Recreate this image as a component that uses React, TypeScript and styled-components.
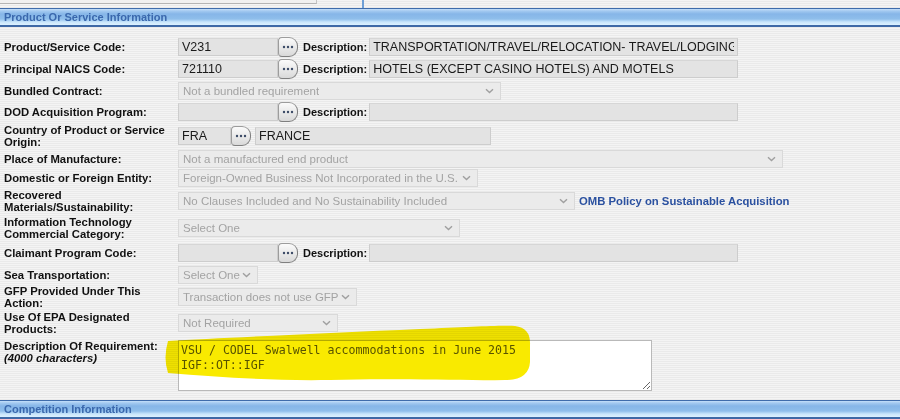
import styled, { createGlobalStyle } from 'styled-components';

const GlobalStyle = createGlobalStyle`
  html, body {
    margin: 0;
    padding: 0;
  }
  body {
    width: 900px;
    height: 419px;
    overflow: hidden;
    font-family: 'Liberation Sans', Arial, sans-serif;
    background: repeating-linear-gradient(#f4f4f4 0 1px, #eaeaea 1px 2px);
  }
`;

const Page = styled.div`
  position: relative;
  width: 900px;
  height: 419px;
  overflow: hidden;
`;

const TopStrip = styled.div`
  display: flex;
  align-items: flex-start;
  height: 8px;
`;

const PrevBox = styled.div`
  width: 316px;
  height: 3px;
  background: #f0f0f0;
  border-bottom: 1px solid #b4b4b4;
  border-right: 1px solid #c4c4c4;
`;

const PrevDivider = styled.div`
  margin-left: 45px;
  width: 2px;
  height: 8px;
  background: #6e9fd6;
`;

const SectionBar = styled.div`
  height: 16px;
  padding-left: 4px;
  border-top: 1px solid #3f6cab;
  border-bottom: 2px solid #3e69a6;
  background: linear-gradient(
    #c4e0fa 0,
    #a3c9f0 2px,
    #86b6e8 5px,
    #8fbeeb 10px,
    #c9e6fb 13px,
    #dcf1ff 16px
  );
  color: #3a68ad;
  font-size: 11px;
  font-weight: bold;
  line-height: 17px;
`;

const Rows = styled.div`
  padding-top: 9px;
`;

const Row = styled.div<{ $h: number; $top?: boolean }>`
  display: flex;
  align-items: ${(p) => (p.$top ? 'flex-start' : 'center')};
  height: ${(p) => p.$h}px;
`;

const Label = styled.div<{ $mt?: number }>`
  flex: none;
  width: 178px;
  margin-top: ${(p) => p.$mt || 0}px;
  padding-left: 4px;
  box-sizing: border-box;
  color: #111;
  font-size: 11.3px;
  font-weight: bold;
  line-height: 12px;
`;

const Hint = styled.i`
  font-weight: bold;
`;

const TextBox = styled.input<{ $w: number; $ml?: number }>`
  width: ${(p) => p.$w}px;
  height: 18px;
  margin: 0 0 0 ${(p) => p.$ml || 0}px;
  padding: 0 3px;
  box-sizing: border-box;
  border: 1px solid #cdcdcd;
  border-top-color: #d6d6d6;
  background: #e3e3e3;
  color: #1a1a1a;
  font-family: 'Liberation Sans', Arial, sans-serif;
  font-size: 12.5px;
  outline: none;
`;

const LookupBtn = styled.button<{ $ml?: number }>`
  display: flex;
  align-items: center;
  justify-content: center;
  width: 20px;
  height: 20px;
  margin-left: ${(p) => p.$ml || 0}px;
  padding: 0;
  box-sizing: border-box;
  border: 1px solid #9c9c9c;
  border-right-color: #7f7f7f;
  border-bottom-color: #7f7f7f;
  border-radius: 4px 9px 9px 4px;
  background: linear-gradient(#fbfbfb, #d9d9d9);
`;

const DescLabel = styled.span`
  margin: 0 2px 0 5px;
  color: #111;
  font-size: 11px;
  font-weight: bold;
`;

const SelectBox = styled.div<{ $w: number }>`
  display: flex;
  align-items: center;
  justify-content: space-between;
  width: ${(p) => p.$w}px;
  height: 18px;
  padding: 0 6px 0 4px;
  box-sizing: border-box;
  border: 1px solid #d9d9d9;
  background: #ebebeb;
  color: #a3a3a3;
  font-size: 11.5px;
  white-space: nowrap;
  overflow: hidden;
`;

const SelectText = styled.span`
  overflow: hidden;
`;

const PolicyLink = styled.a`
  margin-left: 4px;
  color: #2b51a0;
  font-size: 11.3px;
  font-weight: bold;
  text-decoration: none;
`;

const ReqText = styled.textarea`
  width: 474px;
  height: 51px;
  margin: 3px 0 0;
  padding: 2px 2px;
  box-sizing: border-box;
  border: 1px solid #b9b9b9;
  background: #fff;
  color: #5a5a5a;
  font-family: 'DejaVu Sans Mono', 'Liberation Mono', monospace;
  font-size: 11.6px;
  line-height: 15px;
  resize: both;
  outline: none;
`;

const Highlight = styled.svg`
  position: absolute;
  left: 0;
  top: 0;
  mix-blend-mode: multiply;
  pointer-events: none;
`;

const Dots = () => (
  <svg width="12" height="4" viewBox="0 0 12 4">
    <circle cx="2" cy="2" r="1.2" fill="#3b4a66" />
    <circle cx="6" cy="2" r="1.2" fill="#3b4a66" />
    <circle cx="10" cy="2" r="1.2" fill="#3b4a66" />
  </svg>
);

const Chevron = () => (
  <svg width="9" height="6" viewBox="0 0 9 6">
    <path d="M1 1.2 L4.5 4.6 L8 1.2" fill="none" stroke="#a0a0a0" strokeWidth="1.4" />
  </svg>
);

const Select = ({ w, value }: { w: number; value: string }) => (
  <SelectBox $w={w}>
    <SelectText>{value}</SelectText>
    <Chevron />
  </SelectBox>
);

const Lookup = ({ ml }: { ml?: number }) => (
  <LookupBtn type="button" $ml={ml}>
    <Dots />
  </LookupBtn>
);

const CodeWithDesc = ({ code, desc }: { code: string; desc: string }) => (
  <>
    <TextBox $w={100} readOnly value={code} />
    <Lookup />
    <DescLabel>Description:</DescLabel>
    <TextBox $w={369} readOnly value={desc} />
  </>
);

const App = () => {
  return (
    <Page>
      <GlobalStyle />
      <TopStrip>
        <PrevBox />
        <PrevDivider />
      </TopStrip>
      <SectionBar>Product Or Service Information</SectionBar>
      <Rows>
        <Row $h={21}>
          <Label>Product/Service Code:</Label>
          <CodeWithDesc code="V231" desc="TRANSPORTATION/TRAVEL/RELOCATION- TRAVEL/LODGING/RECRUITMENT" />
        </Row>
        <Row $h={23}>
          <Label>Principal NAICS Code:</Label>
          <CodeWithDesc code="721110" desc="HOTELS (EXCEPT CASINO HOTELS) AND MOTELS" />
        </Row>
        <Row $h={21}>
          <Label>Bundled Contract:</Label>
          <Select w={323} value="Not a bundled requirement" />
        </Row>
        <Row $h={21}>
          <Label>DOD Acquisition Program:</Label>
          <CodeWithDesc code="" desc="" />
        </Row>
        <Row $h={27}>
          <Label>
            Country of Product or Service
            <br />
            Origin:
          </Label>
          <TextBox $w={53} readOnly value="FRA" />
          <Lookup ml={0} />
          <TextBox $w={236} $ml={4} readOnly value="FRANCE" />
        </Row>
        <Row $h={19}>
          <Label>Place of Manufacture:</Label>
          <Select w={605} value="Not a manufactured end product" />
        </Row>
        <Row $h={20}>
          <Label>Domestic or Foreign Entity:</Label>
          <Select w={300} value="Foreign-Owned Business Not Incorporated in the U.S." />
        </Row>
        <Row $h={25}>
          <Label>
            Recovered
            <br />
            Materials/Sustainability:
          </Label>
          <Select w={397} value="No Clauses Included and No Sustainability Included" />
          <PolicyLink href="#">OMB Policy on Sustainable Acquisition</PolicyLink>
        </Row>
        <Row $h={29}>
          <Label>
            Information Technology
            <br />
            Commercial Category:
          </Label>
          <Select w={282} value="Select One" />
        </Row>
        <Row $h={22}>
          <Label>Claimant Program Code:</Label>
          <CodeWithDesc code="" desc="" />
        </Row>
        <Row $h={21}>
          <Label>Sea Transportation:</Label>
          <Select w={80} value="Select One" />
        </Row>
        <Row $h={23}>
          <Label>
            GFP Provided Under This
            <br />
            Action:
          </Label>
          <Select w={179} value="Transaction does not use GFP" />
        </Row>
        <Row $h={29}>
          <Label>
            Use Of EPA Designated
            <br />
            Products:
          </Label>
          <Select w={160} value="Not Required" />
        </Row>
        <Row $h={63} $top>
          <Label $mt={3}>
            Description Of Requirement:
            <br />
            <Hint>(4000 characters)</Hint>
          </Label>
          <ReqText
            readOnly
            value={'VSU / CODEL Swalwell accommodations in June 2015\nIGF::OT::IGF'}
          />
        </Row>
      </Rows>
      <SectionBar>Competition Information</SectionBar>
      <Highlight width="900" height="419" viewBox="0 0 900 419">
        <path
          d="M168 341 C 220 338, 330 333, 420 329 C 470 327, 500 325, 515 326 Q 531 328, 530 345 L 530 362 Q 529 380, 505 380 C 460 381, 400 378, 330 380 C 270 381, 220 377, 168 373 Q 163 358, 168 341 Z"
          fill="#f9ea00"
        />
      </Highlight>
    </Page>
  );
};

export default App;
